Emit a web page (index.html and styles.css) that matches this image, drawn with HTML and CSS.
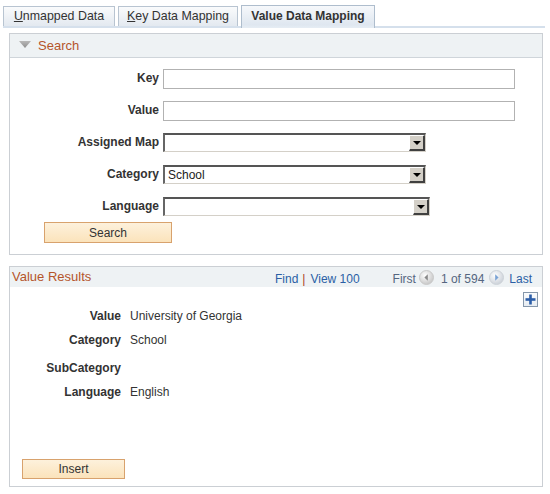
FILE: index.html
```html
<!DOCTYPE html>
<html>
<head>
<meta charset="utf-8">
<link rel="stylesheet" href="styles.css">
</head>
<body>
<div class="page">
  <div class="tabbar">
    <div class="tab t1"><span class="u">U</span>nmapped Data</div>
    <div class="tab t2"><span class="u">K</span>ey Data Mapping</div>
    <div class="tab t3 active">Value Data Mapping</div>
  </div>

  <section class="panel search-panel">
    <div class="panel-head">
      <svg class="collapse" width="12" height="7" viewBox="0 0 12 7"><defs><linearGradient id="tg" x1="0" y1="0" x2="0" y2="1"><stop offset="0" stop-color="#b8b8b8"/><stop offset="1" stop-color="#8e8e8e"/></linearGradient></defs><polygon points="0,0 12,0 6,7" fill="url(#tg)"/></svg>
      <span class="title">Search</span>
    </div>
    <div class="form">
      <label class="lbl">Key</label>
      <div class="field"><span class="text-input wide"></span></div>
      <label class="lbl">Value</label>
      <div class="field"><span class="text-input wide"></span></div>
      <label class="lbl">Assigned Map</label>
      <div class="field"><span class="select s263"><span class="sel-text"></span><span class="sel-btn"><span class="arrow"></span></span></span></div>
      <label class="lbl">Category</label>
      <div class="field"><span class="select s263"><span class="sel-text">School</span><span class="sel-btn"><span class="arrow"></span></span></span></div>
      <label class="lbl">Language</label>
      <div class="field"><span class="select s267"><span class="sel-text"></span><span class="sel-btn"><span class="arrow"></span></span></span></div>
    </div>
    <button class="btn search-btn">Search</button>
  </section>

  <section class="panel results-panel">
    <div class="panel-head results-head">
      <span class="title">Value Results</span>
      <div class="pager">
        <span class="link">Find</span><span class="sep">|</span><span class="link">View 100</span>
        <span class="nav-gap"></span>
        <span class="muted">First</span>
        <svg class="circ prev" width="15" height="15" viewBox="0 0 15 15"><defs><radialGradient id="cg1" cx="0.4" cy="0.35" r="0.7"><stop offset="0" stop-color="#ffffff"/><stop offset="1" stop-color="#c4c4c4"/></radialGradient></defs><circle cx="7.5" cy="7.5" r="7" fill="url(#cg1)" stroke="#c9c9c9" stroke-width="1"/><polygon points="8.8,4.2 8.8,10.8 5.4,7.5" fill="#8a8a8a"/></svg>
        <span class="muted">1 of 594</span>
        <svg class="circ next" width="15" height="15" viewBox="0 0 15 15"><defs><radialGradient id="cg2" cx="0.4" cy="0.35" r="0.7"><stop offset="0" stop-color="#ffffff"/><stop offset="1" stop-color="#c8ced6"/></radialGradient></defs><circle cx="7.5" cy="7.5" r="7" fill="url(#cg2)" stroke="#cdd2d8" stroke-width="1"/><polygon points="6.2,4.2 6.2,10.8 9.6,7.5" fill="#7aa2d4"/></svg>
        <span class="link">Last</span>
      </div>
    </div>
    <div class="add-row">
      <span class="add-btn"><svg width="11" height="11" viewBox="0 0 11 11"><rect x="4.2" y="0.5" width="2.6" height="10" fill="#2c5ea8"/><rect x="0.5" y="4.2" width="10" height="2.6" fill="#2c5ea8"/></svg></span>
    </div>
    <div class="details">
      <span class="dl">Value</span><span class="dv">University of Georgia</span>
      <span class="dl">Category</span><span class="dv">School</span>
      <span class="dl extra">SubCategory</span><span class="dv extra"></span>
      <span class="dl">Language</span><span class="dv">English</span>
    </div>
    <button class="btn insert-btn">Insert</button>
  </section>
</div>
</body>
</html>
```

FILE: styles.css
```css
* { box-sizing: border-box; }
body {
  margin: 0;
  font-family: Arial, "Liberation Sans", Helvetica, sans-serif;
  font-size: 12px;
  color: #333;
  background: #fff;
}
.page { width: 550px; }

/* Tabs */
.tabbar {
  display: flex;
  align-items: flex-end;
  gap: 3px;
  margin-left: 3px;
  width: 542px;
  padding-top: 5px;
  border-bottom: 2px solid #d5e0ec;
  height: 28px;
}
.tab {
  height: 20px;
  line-height: 19px;
  padding: 0;
  text-align: center;
  border: 1px solid #b8c4d1;
  border-bottom: none;
  background: linear-gradient(#fafbfc, #e3e9f0);
  color: #333;
  font-size: 12.4px;
  white-space: nowrap;
}
.t1 { width: 112px; }
.t2 { width: 120px; }
.t3 { width: 134px; }
.tab .u { text-decoration: underline; }
.tab.active {
  height: 23px;
  margin-bottom: -2px;
  line-height: 20px;
  font-weight: bold;
  font-size: 12px;
  border-color: #aebdcd;
  background: linear-gradient(#f6f8fb, #dfe7f0 85%, #e6edf4);
}

/* Panels */
.panel {
  margin-left: 9px;
  width: 534px;
  border: 1px solid #cbcfd4;
}
.search-panel { margin-top: 5px; padding-bottom: 11px; }
.panel-head {
  display: flex;
  align-items: center;
  background: #eef2f4;
  height: 24px;
  border-bottom: 1px solid #cfd5da;
}
.search-panel .panel-head { padding-left: 9px; }
.collapse { margin-right: 7px; margin-top: -3px; }
.title {
  color: #b5552b;
  font-size: 13px;
}

/* Form */
.form {
  display: grid;
  grid-template-columns: 149px auto;
  column-gap: 4px;
  row-gap: 12px;
  grid-auto-rows: 20px;
  padding-top: 11px;
}
.lbl {
  font-weight: bold;
  text-align: right;
  line-height: 19px;
  color: #333;
  white-space: nowrap;
}
.field { display: flex; align-items: flex-start; }
.text-input {
  display: block;
  height: 20px;
  border: 1px solid #b2b2b2;
  background: #fff;
}
.text-input.wide { width: 352px; }

.select {
  display: flex;
  height: 19px;
  border-top: 2px solid #555;
  border-left: 2px solid #666;
  border-bottom: 1px solid #d4d0c8;
  border-right: 1px solid #d4d0c8;
  background: #fff;
}
.select.s263 { width: 263px; }
.select.s267 { width: 267px; }
.sel-text {
  flex: 1;
  padding-left: 3px;
  line-height: 16px;
  font-size: 12px;
  color: #222;
}
.sel-btn {
  width: 16px;
  height: 16px;
  background: #d4d0c8;
  border-top: 1px solid #fff;
  border-left: 1px solid #fff;
  border-right: 2px solid #404040;
  border-bottom: 2px solid #404040;
  display: flex;
  align-items: center;
  justify-content: center;
}
.arrow {
  width: 0;
  height: 0;
  border-left: 4px solid transparent;
  border-right: 4px solid transparent;
  border-top: 4px solid #000;
  margin-top: 1px;
}

/* Buttons */
.btn {
  display: block;
  font-family: Arial, "Liberation Sans", sans-serif;
  font-size: 12px;
  color: #333;
  border: 1px solid #d8a26d;
  background: linear-gradient(#fdf1dc, #fbe3bb);
  padding: 0;
}
.search-btn {
  width: 128px;
  height: 21px;
  margin: 5px 0 0 34px;
}

/* Results */
.results-panel {
  margin-top: 11px;
  padding-bottom: 7px;
}
.results-head {
  height: 20px;
  border-bottom: none;
  justify-content: space-between;
  padding-left: 2px;
  padding-right: 10px;
}
.results-head .title { margin-top: -1px; }
.pager {
  display: flex;
  align-items: center;
  font-size: 12px;
  margin-top: 3px;
}
.link { color: #2a5fa5; }
.muted { color: #556680; }
.sep { color: #a9421f; margin: 0 5px 0 4px; }
.nav-gap { width: 33px; }
.circ { margin-top: -3px; }
.circ.prev { margin-left: 3px; margin-right: 7px; }
.circ.next { margin-left: 5px; margin-right: 5px; }

.add-row {
  display: flex;
  justify-content: flex-end;
  padding: 5px 4px 0 0;
}
.add-btn {
  width: 15px;
  height: 15px;
  border: 1px solid #8597ab;
  background: linear-gradient(#fbfcfd, #e6ecf2);
  display: flex;
  align-items: center;
  justify-content: center;
}
.details {
  display: grid;
  grid-template-columns: 111px auto;
  column-gap: 9px;
  row-gap: 10px;
  line-height: 14px;
  margin-top: 2px;
}
.dl { font-weight: bold; text-align: right; }
.extra { margin-top: 4px; height: 14px; }
.insert-btn {
  width: 103px;
  height: 20px;
  margin: 60px 0 0 12px;
}
```
